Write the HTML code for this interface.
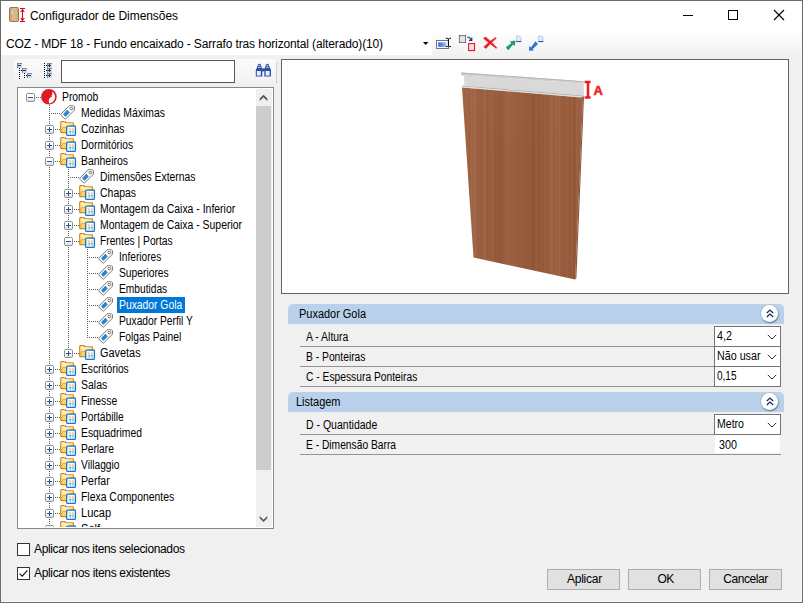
<!DOCTYPE html>
<html lang="pt-BR"><head><meta charset="utf-8"><title>Configurador de Dimensões</title><style>
*{box-sizing:border-box;margin:0;padding:0}
html,body{width:803px;height:603px;overflow:hidden;background:#f0f0f0}
body{position:relative;font-family:"Liberation Sans",sans-serif;font-size:11px;color:#000}
.a{position:absolute}
.ic{position:absolute;overflow:visible}
.tl{position:absolute;height:16px;line-height:16px;font-size:12px;white-space:nowrap;color:#000;transform-origin:0 0}
.tl.sel{color:#fff}
.selbg{position:absolute;background:#0078d7}
.t12{position:absolute;font-size:12px;white-space:nowrap;line-height:16px;height:16px}
.t11{position:absolute;font-size:12px;white-space:nowrap;line-height:16px;height:16px;transform-origin:0 0}
.btn{position:absolute;width:73px;height:21px;top:569px;background:#e1e1e1;border:1px solid #adadad;font-size:12px;line-height:19px;text-align:center}
.hdr{position:absolute;left:287.6px;width:496px;height:20px;background:#b9d1ea;border-radius:5px 5px 0 0}
.ln{position:absolute;left:300px;width:481px;height:1px;background:#939393}
.cb{position:absolute;left:714px;width:67px;height:21px;background:#fff;border:1px solid #747474}
.circ{position:absolute;width:17px;height:17px;border-radius:50%;background:radial-gradient(circle at 45% 40%,#fff 55%,#e3e6ec 100%);box-shadow:0 0 0 0.6px rgba(110,120,140,.45),0.6px 1.2px 1.6px rgba(50,60,80,.6)}
</style></head><body>
<svg width="0" height="0" style="position:absolute;left:0;top:0"><defs><linearGradient id="fg" x1="0" y1="0" x2="0" y2="1"><stop offset="0" stop-color="#fff3bd"/><stop offset="1" stop-color="#fbd15f"/></linearGradient><linearGradient id="eg" x1="0" y1="0" x2="0" y2="1"><stop offset="0.4" stop-color="#ffffff"/><stop offset="1" stop-color="#dcdcdc"/></linearGradient></defs></svg>
<div class="a" style="left:0;top:0;width:803px;height:31px;background:#fff"></div>
<div class="a" style="left:0;top:31px;width:803px;height:25px;background:linear-gradient(#ffffff,#f1f1f1)"></div>
<div class="a" style="left:1px;top:31px;width:431px;height:24px;background:#fff"></div>
<svg class="ic" style="left:8px;top:6px" width="19" height="18" viewBox="0 0 19 18">
<defs><linearGradient id="wd" x1="0" y1="0" x2="1" y2="0"><stop offset="0" stop-color="#c9a06a"/><stop offset="0.5" stop-color="#dfbd8c"/><stop offset="1" stop-color="#cfa872"/></linearGradient></defs>
<rect x="1.5" y="1.5" width="9" height="14" rx="1" fill="url(#wd)" stroke="#9a7648" stroke-width="1"/>
<rect x="3.6" y="4" width="1.3" height="5" fill="#f2f2f2" stroke="#9b9b9b" stroke-width="0.3"/>
<path d="M12 2.5 H17 M12 15.5 H17 M14.5 3 V15" stroke="#e3061a" stroke-width="1.1" fill="none"/><path d="M12.1 5.8 L14.5 3 L16.9 5.8 Z M12.1 12.2 L14.5 15 L16.9 12.2 Z" fill="#e3061a"/>
</svg>
<div class="t12" style="left:30px;top:8px;letter-spacing:-0.057px;">Configurador de Dimensões</div>
<svg class="ic" style="left:680px;top:5px" width="110" height="20" viewBox="0 0 110 20" shape-rendering="crispEdges">
<path d="M3 10.5 H13" stroke="#000" stroke-width="1"/>
<rect x="48.5" y="5.5" width="9" height="9" fill="none" stroke="#000" stroke-width="1"/>
<path d="M94 5 L104 15 M104 5 L94 15" stroke="#000" stroke-width="1.1" shape-rendering="auto"/>
</svg>
<div class="t12" style="left:6px;top:36px;letter-spacing:-0.129px;">COZ - MDF 18 - Fundo encaixado - Sarrafo tras horizontal (alterado)(10)</div>
<svg class="ic" style="left:423px;top:42px" width="6" height="4" viewBox="0 0 6 4"><path d="M0 0 H5.4 L2.7 3 Z" fill="#000"/></svg>
<svg class="ic" style="left:434px;top:33px" width="114" height="20" viewBox="0 0 114 20">
<defs><linearGradient id="bl" x1="0" y1="0" x2="1" y2="0"><stop offset="0" stop-color="#2a66de"/><stop offset="1" stop-color="#9fc0f8"/></linearGradient></defs>
<rect x="2.5" y="7.5" width="12" height="8" fill="#fff" stroke="#70757f" stroke-width="1"/>
<rect x="4.3" y="9.3" width="8" height="4.6" fill="url(#bl)"/>
<path d="M11.8 5.2 Q13.7 5.2 14.4 6 Q15.1 5.2 17 5.2 M14.4 6 V12.9 M11.8 13.7 Q13.7 13.7 14.4 12.9 Q15.1 13.7 17 13.7" stroke="#000" stroke-width="1" fill="none"/>
<rect x="25.4" y="2.6" width="6.1" height="6.8" fill="#e6e6e6" stroke="#857780" stroke-width="1"/><path d="M25 2.2h.9v.9h-.9z M31 2.2h.9v.9h-.9z M25 8.9h.9v.9h-.9z M31 8.9h.9v.9h-.9z" fill="#3d3238"/>
<rect x="34.6" y="10.6" width="6" height="7" fill="#e4e4e4" stroke="#f00010" stroke-width="1"/>
<path d="M33.2 4.2 L35 4.2 L37.4 6.8 M37.8 4.6 V7.4 H35" stroke="#1430a0" stroke-width="1.1" fill="none"/>
<path d="M49.4 5.4 L51.6 3.9 Q57.6 8.6 62.9 14.7 L62.2 15.4 Q56 10.6 49.4 5.4 Z M61.6 4.4 L62.4 5.2 Q56.6 9.6 52 15.5 L49.8 13.9 Q55 8.4 61.6 4.4 Z" fill="#ea1c24" stroke="#ea1c24" stroke-width="0.5" stroke-linejoin="round"/>
<path d="M71.8 14.4 L77.4 10 L75.8 8.4 L81.4 7.6 L80.9 13 L79 11.6 L74.4 17.2 Z" fill="#1f9a6c"/>
<path d="M82.5 3 H85.5 L87 4.5 V8.6 H82.5 Z" fill="#dbeaff" stroke="#9ab0e0" stroke-width="0.6"/><path d="M82.2 8.6 H87.3" stroke="#3646a8" stroke-width="1"/>
<path d="M95 17.7 L95.3 13 L97 14.6 L101.5 8.3 L104 11.1 L98.6 16.2 L99.8 17.4 Z" fill="#2f70d2"/>
<path d="M104.5 3 H107.5 L109 4.5 V8.6 H104.5 Z" fill="#dbeaff" stroke="#9ab0e0" stroke-width="0.6"/><path d="M104.2 8.6 H109.3" stroke="#3646a8" stroke-width="1"/>
</svg>
<div class="a" style="left:14px;top:59px;width:262px;height:25px;border-radius:3px;background:linear-gradient(#fbfbfb,#f1f1f1)"></div>
<svg class="ic" style="left:16px;top:61px" width="40" height="20" viewBox="0 0 40 20" shape-rendering="crispEdges">
<g fill="#d8d8d8" stroke="none">
<rect x="1" y="2" width="5" height="5"/><rect x="6" y="7" width="5" height="5"/><rect x="11" y="12" width="5" height="5"/>
<rect x="31" y="2" width="5" height="5"/><rect x="31" y="7" width="5" height="5"/><rect x="31" y="12" width="5" height="5"/>
</g>
<g fill="none" stroke="#5b8fc9" stroke-width="1">
<path d="M1.5 7 V2.5 H6 M6.5 12 V7.5 H11 M11.5 17 V12.5 H16"/>
<path d="M31.5 7 V2.5 H36 M31.5 12 V7.5 H36 M31.5 17 V12.5 H36"/>
</g>
<g stroke="#333" stroke-width="1" fill="none">
<path d="M2 4.5 H5 M7 9.5 H10 M12 14.5 H15"/>
<path d="M32 4.5 H35 M33.5 3 V6 M32 9.5 H35 M33.5 8 V11 M32 14.5 H35 M33.5 13 V16"/>
</g>
<g fill="#000">
<path d="M3 7h1v1h-1z M3 9h1v1h-1z M3 11h1v1h-1z M3 13h1v1h-1z M3 15h1v1h-1z M3 17h1v1h-1z M5 9h1v1h-1z"/>
<path d="M8 12h1v1h-1z M8 14h1v1h-1z M8 16h1v1h-1z M10 14h1v1h-1z"/>
<path d="M28 2h1v1h-1z M28 4h1v1h-1z M28 6h1v1h-1z M28 8h1v1h-1z M28 10h1v1h-1z M28 12h1v1h-1z M28 14h1v1h-1z M28 16h1v1h-1z M30 4h1v1h-1z M30 9h1v1h-1z M30 14h1v1h-1z"/>
</g></svg>
<div class="a" style="left:61px;top:60px;width:174px;height:23px;background:#fff;border:1px solid #555"></div>
<div class="a" style="left:276px;top:62px;width:1px;height:21px;background:#cfcfcf"></div>
<svg class="ic" style="left:255px;top:63px" width="17" height="15" viewBox="0 0 17 15">
<path d="M2.5 3.2 Q2.5 0.8 4.4 0.8 Q6.3 0.8 6.3 3.2 L7.3 6 V13.4 H0.8 V7 Z" fill="#3050a8"/>
<path d="M10.5 3.2 Q10.5 0.8 12.4 0.8 Q14.3 0.8 14.3 3.2 L16 7 V13.4 H9.3 V6 Z" fill="#3050a8"/>
<rect x="6.8" y="5.4" width="3" height="3" fill="#3050a8"/>
<rect x="1.8" y="8" width="4" height="4.6" fill="#e6edfc"/><rect x="10.6" y="8" width="4" height="4.6" fill="#e6edfc"/>
<path d="M3.4 2.4 H5.4 M11.4 2.4 H13.4 M3 4.4 H5.8 M11 4.4 H13.8" stroke="#c9d6f5" stroke-width="0.9"/>
</svg>
<div class="a" style="left:17px;top:87px;width:257px;height:442px;background:#fff;border:1px solid #828790"></div>
<div class="a" style="left:18px;top:88px;width:238px;height:439px;overflow:hidden"><div class="a" style="left:-18px;top:-88px;width:280px;height:540px">
<svg class="ic" style="left:0;top:0" width="280" height="540" viewBox="0 0 280 540"><path d="M36 97h1v1h-1zM38 97h1v1h-1zM40 97h1v1h-1zM51 113h1v1h-1zM53 113h1v1h-1zM55 113h1v1h-1zM57 113h1v1h-1zM59 113h1v1h-1zM55 129h1v1h-1zM57 129h1v1h-1zM59 129h1v1h-1zM55 145h1v1h-1zM57 145h1v1h-1zM59 145h1v1h-1zM55 161h1v1h-1zM57 161h1v1h-1zM59 161h1v1h-1zM70 177h1v1h-1zM72 177h1v1h-1zM74 177h1v1h-1zM76 177h1v1h-1zM78 177h1v1h-1zM74 193h1v1h-1zM76 193h1v1h-1zM78 193h1v1h-1zM74 209h1v1h-1zM76 209h1v1h-1zM78 209h1v1h-1zM74 225h1v1h-1zM76 225h1v1h-1zM78 225h1v1h-1zM74 241h1v1h-1zM76 241h1v1h-1zM78 241h1v1h-1zM89 257h1v1h-1zM91 257h1v1h-1zM93 257h1v1h-1zM95 257h1v1h-1zM97 257h1v1h-1zM89 273h1v1h-1zM91 273h1v1h-1zM93 273h1v1h-1zM95 273h1v1h-1zM97 273h1v1h-1zM89 289h1v1h-1zM91 289h1v1h-1zM93 289h1v1h-1zM95 289h1v1h-1zM97 289h1v1h-1zM89 305h1v1h-1zM91 305h1v1h-1zM93 305h1v1h-1zM95 305h1v1h-1zM97 305h1v1h-1zM89 321h1v1h-1zM91 321h1v1h-1zM93 321h1v1h-1zM95 321h1v1h-1zM97 321h1v1h-1zM89 337h1v1h-1zM91 337h1v1h-1zM93 337h1v1h-1zM95 337h1v1h-1zM97 337h1v1h-1zM74 353h1v1h-1zM76 353h1v1h-1zM78 353h1v1h-1zM55 369h1v1h-1zM57 369h1v1h-1zM59 369h1v1h-1zM55 385h1v1h-1zM57 385h1v1h-1zM59 385h1v1h-1zM55 401h1v1h-1zM57 401h1v1h-1zM59 401h1v1h-1zM55 417h1v1h-1zM57 417h1v1h-1zM59 417h1v1h-1zM55 433h1v1h-1zM57 433h1v1h-1zM59 433h1v1h-1zM55 449h1v1h-1zM57 449h1v1h-1zM59 449h1v1h-1zM55 465h1v1h-1zM57 465h1v1h-1zM59 465h1v1h-1zM55 481h1v1h-1zM57 481h1v1h-1zM59 481h1v1h-1zM55 497h1v1h-1zM57 497h1v1h-1zM59 497h1v1h-1zM55 513h1v1h-1zM57 513h1v1h-1zM59 513h1v1h-1zM55 529h1v1h-1zM57 529h1v1h-1zM59 529h1v1h-1zM49 105h1v1h-1zM49 107h1v1h-1zM49 109h1v1h-1zM49 111h1v1h-1zM49 113h1v1h-1zM49 115h1v1h-1zM49 117h1v1h-1zM49 119h1v1h-1zM49 121h1v1h-1zM49 123h1v1h-1zM49 135h1v1h-1zM49 137h1v1h-1zM49 139h1v1h-1zM49 151h1v1h-1zM49 153h1v1h-1zM49 155h1v1h-1zM49 167h1v1h-1zM49 169h1v1h-1zM49 171h1v1h-1zM49 173h1v1h-1zM49 175h1v1h-1zM49 177h1v1h-1zM49 179h1v1h-1zM49 181h1v1h-1zM49 183h1v1h-1zM49 185h1v1h-1zM49 187h1v1h-1zM49 189h1v1h-1zM49 191h1v1h-1zM49 193h1v1h-1zM49 195h1v1h-1zM49 197h1v1h-1zM49 199h1v1h-1zM49 201h1v1h-1zM49 203h1v1h-1zM49 205h1v1h-1zM49 207h1v1h-1zM49 209h1v1h-1zM49 211h1v1h-1zM49 213h1v1h-1zM49 215h1v1h-1zM49 217h1v1h-1zM49 219h1v1h-1zM49 221h1v1h-1zM49 223h1v1h-1zM49 225h1v1h-1zM49 227h1v1h-1zM49 229h1v1h-1zM49 231h1v1h-1zM49 233h1v1h-1zM49 235h1v1h-1zM49 237h1v1h-1zM49 239h1v1h-1zM49 241h1v1h-1zM49 243h1v1h-1zM49 245h1v1h-1zM49 247h1v1h-1zM49 249h1v1h-1zM49 251h1v1h-1zM49 253h1v1h-1zM49 255h1v1h-1zM49 257h1v1h-1zM49 259h1v1h-1zM49 261h1v1h-1zM49 263h1v1h-1zM49 265h1v1h-1zM49 267h1v1h-1zM49 269h1v1h-1zM49 271h1v1h-1zM49 273h1v1h-1zM49 275h1v1h-1zM49 277h1v1h-1zM49 279h1v1h-1zM49 281h1v1h-1zM49 283h1v1h-1zM49 285h1v1h-1zM49 287h1v1h-1zM49 289h1v1h-1zM49 291h1v1h-1zM49 293h1v1h-1zM49 295h1v1h-1zM49 297h1v1h-1zM49 299h1v1h-1zM49 301h1v1h-1zM49 303h1v1h-1zM49 305h1v1h-1zM49 307h1v1h-1zM49 309h1v1h-1zM49 311h1v1h-1zM49 313h1v1h-1zM49 315h1v1h-1zM49 317h1v1h-1zM49 319h1v1h-1zM49 321h1v1h-1zM49 323h1v1h-1zM49 325h1v1h-1zM49 327h1v1h-1zM49 329h1v1h-1zM49 331h1v1h-1zM49 333h1v1h-1zM49 335h1v1h-1zM49 337h1v1h-1zM49 339h1v1h-1zM49 341h1v1h-1zM49 343h1v1h-1zM49 345h1v1h-1zM49 347h1v1h-1zM49 349h1v1h-1zM49 351h1v1h-1zM49 353h1v1h-1zM49 355h1v1h-1zM49 357h1v1h-1zM49 359h1v1h-1zM49 361h1v1h-1zM49 363h1v1h-1zM49 375h1v1h-1zM49 377h1v1h-1zM49 379h1v1h-1zM49 391h1v1h-1zM49 393h1v1h-1zM49 395h1v1h-1zM49 407h1v1h-1zM49 409h1v1h-1zM49 411h1v1h-1zM49 423h1v1h-1zM49 425h1v1h-1zM49 427h1v1h-1zM49 439h1v1h-1zM49 441h1v1h-1zM49 443h1v1h-1zM49 455h1v1h-1zM49 457h1v1h-1zM49 459h1v1h-1zM49 471h1v1h-1zM49 473h1v1h-1zM49 475h1v1h-1zM49 487h1v1h-1zM49 489h1v1h-1zM49 491h1v1h-1zM49 503h1v1h-1zM49 505h1v1h-1zM49 507h1v1h-1zM49 519h1v1h-1zM49 521h1v1h-1zM49 523h1v1h-1zM68 169h1v1h-1zM68 171h1v1h-1zM68 173h1v1h-1zM68 175h1v1h-1zM68 177h1v1h-1zM68 179h1v1h-1zM68 181h1v1h-1zM68 183h1v1h-1zM68 185h1v1h-1zM68 187h1v1h-1zM68 199h1v1h-1zM68 201h1v1h-1zM68 203h1v1h-1zM68 215h1v1h-1zM68 217h1v1h-1zM68 219h1v1h-1zM68 231h1v1h-1zM68 233h1v1h-1zM68 235h1v1h-1zM68 247h1v1h-1zM68 249h1v1h-1zM68 251h1v1h-1zM68 253h1v1h-1zM68 255h1v1h-1zM68 257h1v1h-1zM68 259h1v1h-1zM68 261h1v1h-1zM68 263h1v1h-1zM68 265h1v1h-1zM68 267h1v1h-1zM68 269h1v1h-1zM68 271h1v1h-1zM68 273h1v1h-1zM68 275h1v1h-1zM68 277h1v1h-1zM68 279h1v1h-1zM68 281h1v1h-1zM68 283h1v1h-1zM68 285h1v1h-1zM68 287h1v1h-1zM68 289h1v1h-1zM68 291h1v1h-1zM68 293h1v1h-1zM68 295h1v1h-1zM68 297h1v1h-1zM68 299h1v1h-1zM68 301h1v1h-1zM68 303h1v1h-1zM68 305h1v1h-1zM68 307h1v1h-1zM68 309h1v1h-1zM68 311h1v1h-1zM68 313h1v1h-1zM68 315h1v1h-1zM68 317h1v1h-1zM68 319h1v1h-1zM68 321h1v1h-1zM68 323h1v1h-1zM68 325h1v1h-1zM68 327h1v1h-1zM68 329h1v1h-1zM68 331h1v1h-1zM68 333h1v1h-1zM68 335h1v1h-1zM68 337h1v1h-1zM68 339h1v1h-1zM68 341h1v1h-1zM68 343h1v1h-1zM68 345h1v1h-1zM68 347h1v1h-1zM87 249h1v1h-1zM87 251h1v1h-1zM87 253h1v1h-1zM87 255h1v1h-1zM87 257h1v1h-1zM87 259h1v1h-1zM87 261h1v1h-1zM87 263h1v1h-1zM87 265h1v1h-1zM87 267h1v1h-1zM87 269h1v1h-1zM87 271h1v1h-1zM87 273h1v1h-1zM87 275h1v1h-1zM87 277h1v1h-1zM87 279h1v1h-1zM87 281h1v1h-1zM87 283h1v1h-1zM87 285h1v1h-1zM87 287h1v1h-1zM87 289h1v1h-1zM87 291h1v1h-1zM87 293h1v1h-1zM87 295h1v1h-1zM87 297h1v1h-1zM87 299h1v1h-1zM87 301h1v1h-1zM87 303h1v1h-1zM87 305h1v1h-1zM87 307h1v1h-1zM87 309h1v1h-1zM87 311h1v1h-1zM87 313h1v1h-1zM87 315h1v1h-1zM87 317h1v1h-1zM87 319h1v1h-1zM87 321h1v1h-1zM87 323h1v1h-1zM87 325h1v1h-1zM87 327h1v1h-1zM87 329h1v1h-1zM87 331h1v1h-1zM87 333h1v1h-1zM87 335h1v1h-1zM87 337h1v1h-1z" fill="#5a5a5a" shape-rendering="crispEdges"/></svg>
<svg class="ic" style="left:26px;top:93px" width="9" height="9" viewBox="0 0 9 9">
<rect x="0.5" y="0.5" width="8" height="8" rx="1.2" fill="url(#eg)" stroke="#8e8e8e"/><path d="M2 4.5 H7" stroke="#2d4fa0" stroke-width="1"/></svg>
<svg class="ic" style="left:41px;top:89px" width="17" height="17" viewBox="0 0 17 17">
<circle cx="7.95" cy="7.8" r="7.8" fill="#dc1b22"/>
<path d="M10.6 2.6 Q12 3.2 12.9 4.2 A6.6 6.6 0 0 1 8.3 14.4 Q7.5 12.8 7.8 11.2 Q8.1 9.6 9.2 8.6 Q10 7.9 11.1 7.5 L10.6 6.7 L10.8 5.9 L11.5 5.1 L11.3 4.3 Q11.2 3.4 10.6 2.6 Z" fill="#ffffff"/>
</svg>
<div class="tl" style="left:62px;top:89px;transform:scaleX(0.8613)">Promob</div>
<svg class="ic" style="left:60px;top:105px" width="17" height="16" viewBox="0 0 17 16">
<path d="M9 0.8 H13.7 L14.5 1.6 V5.1 L5.5 14.1 Q5.2 14.4 4.9 14.1 L0.7 9.9 Q0.5 9.6 0.8 9.3 Z" fill="#ffffff" stroke="#6c6c6c" stroke-width="0.9" stroke-linejoin="round"/>
<path d="M9.2 1.3 H13.5 L14 1.8 V4.9 L12 6.8 L8.2 2.6 Z" fill="#e6e6e6"/>
<circle cx="11.4" cy="3.5" r="1.25" fill="#ffffff" stroke="#6a6a6a" stroke-width="0.9"/>
<path d="M7.45 4.8 L9.8 7.45 L5.5 11.8 L3 9.3 Z" fill="#1577c8"/>
<path d="M6.8 5.5 L9.2 8 M5.9 6.4 L8.3 8.9 M5 7.3 L7.4 9.8 M4.1 8.2 L6.5 10.7 M3.4 9 L5.8 11.5" stroke="#6fb6ee" stroke-width="0.45"/>
</svg>
<div class="tl" style="left:81px;top:105px;transform:scaleX(0.8676)">Medidas Máximas</div>
<svg class="ic" style="left:45px;top:125px" width="9" height="9" viewBox="0 0 9 9">
<rect x="0.5" y="0.5" width="8" height="8" rx="1.2" fill="url(#eg)" stroke="#8e8e8e"/><path d="M2 4.5 H7 M4.5 2 V7" stroke="#2d4fa0" stroke-width="1"/></svg>
<svg class="ic" style="left:60px;top:121px" width="17" height="16" viewBox="0 0 17 16">
<path d="M0.7 1.3 Q0.7 0.7 1.3 0.7 H5 Q5.4 0.7 5.6 1.1 L6 1.8 H12.8 Q13.4 1.8 13.4 2.4 V11 Q13.4 11.6 12.8 11.6 H1.3 Q0.7 11.6 0.7 11 Z" fill="url(#fg)" stroke="#cf8a28" stroke-width="1.2"/>
<path d="M1.5 2.9 H12.6" stroke="#fffbe6" stroke-width="0.8"/>
<path d="M1.3 11 L2.9 6.6 H12" fill="none" stroke="#e6a23c" stroke-width="0.9"/>
<path d="M3.2 7.2 H12.8 V11 H1.8 Z" fill="#fcd669"/>
<path d="M9.5 4.3 H14.6 Q15.7 4.3 15.9 5.2" stroke="#f0a030" stroke-width="0.9" fill="none"/>
<rect x="6.65" y="5.15" width="8.8" height="9.3" rx="1.3" fill="#ffffff" stroke="#1478be" stroke-width="1.3"/>
<path d="M10.2 8.4 V13.4 M13.1 8.4 V13.4 M8.4 10.8 H14.4" stroke="#8db4e4" stroke-width="1" fill="none"/>
<path d="M8.4 7.9 H10.4 M11.6 7.9 H13.6" stroke="#f6b93a" stroke-width="1" fill="none"/>
</svg>
<div class="tl" style="left:81px;top:121px;transform:scaleX(0.8695)">Cozinhas</div>
<svg class="ic" style="left:45px;top:141px" width="9" height="9" viewBox="0 0 9 9">
<rect x="0.5" y="0.5" width="8" height="8" rx="1.2" fill="url(#eg)" stroke="#8e8e8e"/><path d="M2 4.5 H7 M4.5 2 V7" stroke="#2d4fa0" stroke-width="1"/></svg>
<svg class="ic" style="left:60px;top:137px" width="17" height="16" viewBox="0 0 17 16">
<path d="M0.7 1.3 Q0.7 0.7 1.3 0.7 H5 Q5.4 0.7 5.6 1.1 L6 1.8 H12.8 Q13.4 1.8 13.4 2.4 V11 Q13.4 11.6 12.8 11.6 H1.3 Q0.7 11.6 0.7 11 Z" fill="url(#fg)" stroke="#cf8a28" stroke-width="1.2"/>
<path d="M1.5 2.9 H12.6" stroke="#fffbe6" stroke-width="0.8"/>
<path d="M1.3 11 L2.9 6.6 H12" fill="none" stroke="#e6a23c" stroke-width="0.9"/>
<path d="M3.2 7.2 H12.8 V11 H1.8 Z" fill="#fcd669"/>
<path d="M9.5 4.3 H14.6 Q15.7 4.3 15.9 5.2" stroke="#f0a030" stroke-width="0.9" fill="none"/>
<rect x="6.65" y="5.15" width="8.8" height="9.3" rx="1.3" fill="#ffffff" stroke="#1478be" stroke-width="1.3"/>
<path d="M10.2 8.4 V13.4 M13.1 8.4 V13.4 M8.4 10.8 H14.4" stroke="#8db4e4" stroke-width="1" fill="none"/>
<path d="M8.4 7.9 H10.4 M11.6 7.9 H13.6" stroke="#f6b93a" stroke-width="1" fill="none"/>
</svg>
<div class="tl" style="left:81px;top:137px;transform:scaleX(0.8477)">Dormitórios</div>
<svg class="ic" style="left:45px;top:157px" width="9" height="9" viewBox="0 0 9 9">
<rect x="0.5" y="0.5" width="8" height="8" rx="1.2" fill="url(#eg)" stroke="#8e8e8e"/><path d="M2 4.5 H7" stroke="#2d4fa0" stroke-width="1"/></svg>
<svg class="ic" style="left:60px;top:153px" width="17" height="16" viewBox="0 0 17 16">
<path d="M0.7 1.3 Q0.7 0.7 1.3 0.7 H5 Q5.4 0.7 5.6 1.1 L6 1.8 H12.8 Q13.4 1.8 13.4 2.4 V11 Q13.4 11.6 12.8 11.6 H1.3 Q0.7 11.6 0.7 11 Z" fill="url(#fg)" stroke="#cf8a28" stroke-width="1.2"/>
<path d="M1.5 2.9 H12.6" stroke="#fffbe6" stroke-width="0.8"/>
<path d="M1.3 11 L2.9 6.6 H12" fill="none" stroke="#e6a23c" stroke-width="0.9"/>
<path d="M3.2 7.2 H12.8 V11 H1.8 Z" fill="#fcd669"/>
<path d="M9.5 4.3 H14.6 Q15.7 4.3 15.9 5.2" stroke="#f0a030" stroke-width="0.9" fill="none"/>
<rect x="6.65" y="5.15" width="8.8" height="9.3" rx="1.3" fill="#ffffff" stroke="#1478be" stroke-width="1.3"/>
<path d="M10.2 8.4 V13.4 M13.1 8.4 V13.4 M8.4 10.8 H14.4" stroke="#8db4e4" stroke-width="1" fill="none"/>
<path d="M8.4 7.9 H10.4 M11.6 7.9 H13.6" stroke="#f6b93a" stroke-width="1" fill="none"/>
</svg>
<div class="tl" style="left:81px;top:153px;transform:scaleX(0.8696)">Banheiros</div>
<svg class="ic" style="left:79px;top:169px" width="17" height="16" viewBox="0 0 17 16">
<path d="M9 0.8 H13.7 L14.5 1.6 V5.1 L5.5 14.1 Q5.2 14.4 4.9 14.1 L0.7 9.9 Q0.5 9.6 0.8 9.3 Z" fill="#ffffff" stroke="#6c6c6c" stroke-width="0.9" stroke-linejoin="round"/>
<path d="M9.2 1.3 H13.5 L14 1.8 V4.9 L12 6.8 L8.2 2.6 Z" fill="#e6e6e6"/>
<circle cx="11.4" cy="3.5" r="1.25" fill="#ffffff" stroke="#6a6a6a" stroke-width="0.9"/>
<path d="M7.45 4.8 L9.8 7.45 L5.5 11.8 L3 9.3 Z" fill="#1577c8"/>
<path d="M6.8 5.5 L9.2 8 M5.9 6.4 L8.3 8.9 M5 7.3 L7.4 9.8 M4.1 8.2 L6.5 10.7 M3.4 9 L5.8 11.5" stroke="#6fb6ee" stroke-width="0.45"/>
</svg>
<div class="tl" style="left:100px;top:169px;transform:scaleX(0.8616)">Dimensões Externas</div>
<svg class="ic" style="left:64px;top:189px" width="9" height="9" viewBox="0 0 9 9">
<rect x="0.5" y="0.5" width="8" height="8" rx="1.2" fill="url(#eg)" stroke="#8e8e8e"/><path d="M2 4.5 H7 M4.5 2 V7" stroke="#2d4fa0" stroke-width="1"/></svg>
<svg class="ic" style="left:79px;top:185px" width="17" height="16" viewBox="0 0 17 16">
<path d="M0.7 1.3 Q0.7 0.7 1.3 0.7 H5 Q5.4 0.7 5.6 1.1 L6 1.8 H12.8 Q13.4 1.8 13.4 2.4 V11 Q13.4 11.6 12.8 11.6 H1.3 Q0.7 11.6 0.7 11 Z" fill="url(#fg)" stroke="#cf8a28" stroke-width="1.2"/>
<path d="M1.5 2.9 H12.6" stroke="#fffbe6" stroke-width="0.8"/>
<path d="M1.3 11 L2.9 6.6 H12" fill="none" stroke="#e6a23c" stroke-width="0.9"/>
<path d="M3.2 7.2 H12.8 V11 H1.8 Z" fill="#fcd669"/>
<path d="M9.5 4.3 H14.6 Q15.7 4.3 15.9 5.2" stroke="#f0a030" stroke-width="0.9" fill="none"/>
<rect x="6.65" y="5.15" width="8.8" height="9.3" rx="1.3" fill="#ffffff" stroke="#1478be" stroke-width="1.3"/>
<path d="M10.2 8.4 V13.4 M13.1 8.4 V13.4 M8.4 10.8 H14.4" stroke="#8db4e4" stroke-width="1" fill="none"/>
<path d="M8.4 7.9 H10.4 M11.6 7.9 H13.6" stroke="#f6b93a" stroke-width="1" fill="none"/>
</svg>
<div class="tl" style="left:100px;top:185px;transform:scaleX(0.8725)">Chapas</div>
<svg class="ic" style="left:64px;top:205px" width="9" height="9" viewBox="0 0 9 9">
<rect x="0.5" y="0.5" width="8" height="8" rx="1.2" fill="url(#eg)" stroke="#8e8e8e"/><path d="M2 4.5 H7 M4.5 2 V7" stroke="#2d4fa0" stroke-width="1"/></svg>
<svg class="ic" style="left:79px;top:201px" width="17" height="16" viewBox="0 0 17 16">
<path d="M0.7 1.3 Q0.7 0.7 1.3 0.7 H5 Q5.4 0.7 5.6 1.1 L6 1.8 H12.8 Q13.4 1.8 13.4 2.4 V11 Q13.4 11.6 12.8 11.6 H1.3 Q0.7 11.6 0.7 11 Z" fill="url(#fg)" stroke="#cf8a28" stroke-width="1.2"/>
<path d="M1.5 2.9 H12.6" stroke="#fffbe6" stroke-width="0.8"/>
<path d="M1.3 11 L2.9 6.6 H12" fill="none" stroke="#e6a23c" stroke-width="0.9"/>
<path d="M3.2 7.2 H12.8 V11 H1.8 Z" fill="#fcd669"/>
<path d="M9.5 4.3 H14.6 Q15.7 4.3 15.9 5.2" stroke="#f0a030" stroke-width="0.9" fill="none"/>
<rect x="6.65" y="5.15" width="8.8" height="9.3" rx="1.3" fill="#ffffff" stroke="#1478be" stroke-width="1.3"/>
<path d="M10.2 8.4 V13.4 M13.1 8.4 V13.4 M8.4 10.8 H14.4" stroke="#8db4e4" stroke-width="1" fill="none"/>
<path d="M8.4 7.9 H10.4 M11.6 7.9 H13.6" stroke="#f6b93a" stroke-width="1" fill="none"/>
</svg>
<div class="tl" style="left:100px;top:201px;transform:scaleX(0.8700)">Montagem da Caixa - Inferior</div>
<svg class="ic" style="left:64px;top:221px" width="9" height="9" viewBox="0 0 9 9">
<rect x="0.5" y="0.5" width="8" height="8" rx="1.2" fill="url(#eg)" stroke="#8e8e8e"/><path d="M2 4.5 H7 M4.5 2 V7" stroke="#2d4fa0" stroke-width="1"/></svg>
<svg class="ic" style="left:79px;top:217px" width="17" height="16" viewBox="0 0 17 16">
<path d="M0.7 1.3 Q0.7 0.7 1.3 0.7 H5 Q5.4 0.7 5.6 1.1 L6 1.8 H12.8 Q13.4 1.8 13.4 2.4 V11 Q13.4 11.6 12.8 11.6 H1.3 Q0.7 11.6 0.7 11 Z" fill="url(#fg)" stroke="#cf8a28" stroke-width="1.2"/>
<path d="M1.5 2.9 H12.6" stroke="#fffbe6" stroke-width="0.8"/>
<path d="M1.3 11 L2.9 6.6 H12" fill="none" stroke="#e6a23c" stroke-width="0.9"/>
<path d="M3.2 7.2 H12.8 V11 H1.8 Z" fill="#fcd669"/>
<path d="M9.5 4.3 H14.6 Q15.7 4.3 15.9 5.2" stroke="#f0a030" stroke-width="0.9" fill="none"/>
<rect x="6.65" y="5.15" width="8.8" height="9.3" rx="1.3" fill="#ffffff" stroke="#1478be" stroke-width="1.3"/>
<path d="M10.2 8.4 V13.4 M13.1 8.4 V13.4 M8.4 10.8 H14.4" stroke="#8db4e4" stroke-width="1" fill="none"/>
<path d="M8.4 7.9 H10.4 M11.6 7.9 H13.6" stroke="#f6b93a" stroke-width="1" fill="none"/>
</svg>
<div class="tl" style="left:100px;top:217px;transform:scaleX(0.8689)">Montagem de Caixa - Superior</div>
<svg class="ic" style="left:64px;top:237px" width="9" height="9" viewBox="0 0 9 9">
<rect x="0.5" y="0.5" width="8" height="8" rx="1.2" fill="url(#eg)" stroke="#8e8e8e"/><path d="M2 4.5 H7" stroke="#2d4fa0" stroke-width="1"/></svg>
<svg class="ic" style="left:79px;top:233px" width="17" height="16" viewBox="0 0 17 16">
<path d="M0.7 1.3 Q0.7 0.7 1.3 0.7 H5 Q5.4 0.7 5.6 1.1 L6 1.8 H12.8 Q13.4 1.8 13.4 2.4 V11 Q13.4 11.6 12.8 11.6 H1.3 Q0.7 11.6 0.7 11 Z" fill="url(#fg)" stroke="#cf8a28" stroke-width="1.2"/>
<path d="M1.5 2.9 H12.6" stroke="#fffbe6" stroke-width="0.8"/>
<path d="M1.3 11 L2.9 6.6 H12" fill="none" stroke="#e6a23c" stroke-width="0.9"/>
<path d="M3.2 7.2 H12.8 V11 H1.8 Z" fill="#fcd669"/>
<path d="M9.5 4.3 H14.6 Q15.7 4.3 15.9 5.2" stroke="#f0a030" stroke-width="0.9" fill="none"/>
<rect x="6.65" y="5.15" width="8.8" height="9.3" rx="1.3" fill="#ffffff" stroke="#1478be" stroke-width="1.3"/>
<path d="M10.2 8.4 V13.4 M13.1 8.4 V13.4 M8.4 10.8 H14.4" stroke="#8db4e4" stroke-width="1" fill="none"/>
<path d="M8.4 7.9 H10.4 M11.6 7.9 H13.6" stroke="#f6b93a" stroke-width="1" fill="none"/>
</svg>
<div class="tl" style="left:100px;top:233px;transform:scaleX(0.8537)">Frentes | Portas</div>
<svg class="ic" style="left:98px;top:249px" width="17" height="16" viewBox="0 0 17 16">
<path d="M9 0.8 H13.7 L14.5 1.6 V5.1 L5.5 14.1 Q5.2 14.4 4.9 14.1 L0.7 9.9 Q0.5 9.6 0.8 9.3 Z" fill="#ffffff" stroke="#6c6c6c" stroke-width="0.9" stroke-linejoin="round"/>
<path d="M9.2 1.3 H13.5 L14 1.8 V4.9 L12 6.8 L8.2 2.6 Z" fill="#e6e6e6"/>
<circle cx="11.4" cy="3.5" r="1.25" fill="#ffffff" stroke="#6a6a6a" stroke-width="0.9"/>
<path d="M7.45 4.8 L9.8 7.45 L5.5 11.8 L3 9.3 Z" fill="#1577c8"/>
<path d="M6.8 5.5 L9.2 8 M5.9 6.4 L8.3 8.9 M5 7.3 L7.4 9.8 M4.1 8.2 L6.5 10.7 M3.4 9 L5.8 11.5" stroke="#6fb6ee" stroke-width="0.45"/>
</svg>
<div class="tl" style="left:119px;top:249px;transform:scaleX(0.8435)">Inferiores</div>
<svg class="ic" style="left:98px;top:265px" width="17" height="16" viewBox="0 0 17 16">
<path d="M9 0.8 H13.7 L14.5 1.6 V5.1 L5.5 14.1 Q5.2 14.4 4.9 14.1 L0.7 9.9 Q0.5 9.6 0.8 9.3 Z" fill="#ffffff" stroke="#6c6c6c" stroke-width="0.9" stroke-linejoin="round"/>
<path d="M9.2 1.3 H13.5 L14 1.8 V4.9 L12 6.8 L8.2 2.6 Z" fill="#e6e6e6"/>
<circle cx="11.4" cy="3.5" r="1.25" fill="#ffffff" stroke="#6a6a6a" stroke-width="0.9"/>
<path d="M7.45 4.8 L9.8 7.45 L5.5 11.8 L3 9.3 Z" fill="#1577c8"/>
<path d="M6.8 5.5 L9.2 8 M5.9 6.4 L8.3 8.9 M5 7.3 L7.4 9.8 M4.1 8.2 L6.5 10.7 M3.4 9 L5.8 11.5" stroke="#6fb6ee" stroke-width="0.45"/>
</svg>
<div class="tl" style="left:119px;top:265px;transform:scaleX(0.8564)">Superiores</div>
<svg class="ic" style="left:98px;top:281px" width="17" height="16" viewBox="0 0 17 16">
<path d="M9 0.8 H13.7 L14.5 1.6 V5.1 L5.5 14.1 Q5.2 14.4 4.9 14.1 L0.7 9.9 Q0.5 9.6 0.8 9.3 Z" fill="#ffffff" stroke="#6c6c6c" stroke-width="0.9" stroke-linejoin="round"/>
<path d="M9.2 1.3 H13.5 L14 1.8 V4.9 L12 6.8 L8.2 2.6 Z" fill="#e6e6e6"/>
<circle cx="11.4" cy="3.5" r="1.25" fill="#ffffff" stroke="#6a6a6a" stroke-width="0.9"/>
<path d="M7.45 4.8 L9.8 7.45 L5.5 11.8 L3 9.3 Z" fill="#1577c8"/>
<path d="M6.8 5.5 L9.2 8 M5.9 6.4 L8.3 8.9 M5 7.3 L7.4 9.8 M4.1 8.2 L6.5 10.7 M3.4 9 L5.8 11.5" stroke="#6fb6ee" stroke-width="0.45"/>
</svg>
<div class="tl" style="left:119px;top:281px;transform:scaleX(0.8500)">Embutidas</div>
<svg class="ic" style="left:98px;top:297px" width="17" height="16" viewBox="0 0 17 16">
<path d="M9 0.8 H13.7 L14.5 1.6 V5.1 L5.5 14.1 Q5.2 14.4 4.9 14.1 L0.7 9.9 Q0.5 9.6 0.8 9.3 Z" fill="#ffffff" stroke="#6c6c6c" stroke-width="0.9" stroke-linejoin="round"/>
<path d="M9.2 1.3 H13.5 L14 1.8 V4.9 L12 6.8 L8.2 2.6 Z" fill="#e6e6e6"/>
<circle cx="11.4" cy="3.5" r="1.25" fill="#ffffff" stroke="#6a6a6a" stroke-width="0.9"/>
<path d="M7.45 4.8 L9.8 7.45 L5.5 11.8 L3 9.3 Z" fill="#1577c8"/>
<path d="M6.8 5.5 L9.2 8 M5.9 6.4 L8.3 8.9 M5 7.3 L7.4 9.8 M4.1 8.2 L6.5 10.7 M3.4 9 L5.8 11.5" stroke="#6fb6ee" stroke-width="0.45"/>
</svg>
<div class="selbg" style="left:117px;top:297px;width:68px;height:16px"></div>
<div class="tl sel" style="left:119px;top:297px;transform:scaleX(0.8611)">Puxador Gola</div>
<svg class="ic" style="left:98px;top:313px" width="17" height="16" viewBox="0 0 17 16">
<path d="M9 0.8 H13.7 L14.5 1.6 V5.1 L5.5 14.1 Q5.2 14.4 4.9 14.1 L0.7 9.9 Q0.5 9.6 0.8 9.3 Z" fill="#ffffff" stroke="#6c6c6c" stroke-width="0.9" stroke-linejoin="round"/>
<path d="M9.2 1.3 H13.5 L14 1.8 V4.9 L12 6.8 L8.2 2.6 Z" fill="#e6e6e6"/>
<circle cx="11.4" cy="3.5" r="1.25" fill="#ffffff" stroke="#6a6a6a" stroke-width="0.9"/>
<path d="M7.45 4.8 L9.8 7.45 L5.5 11.8 L3 9.3 Z" fill="#1577c8"/>
<path d="M6.8 5.5 L9.2 8 M5.9 6.4 L8.3 8.9 M5 7.3 L7.4 9.8 M4.1 8.2 L6.5 10.7 M3.4 9 L5.8 11.5" stroke="#6fb6ee" stroke-width="0.45"/>
</svg>
<div class="tl" style="left:119px;top:313px;transform:scaleX(0.8543)">Puxador Perfil Y</div>
<svg class="ic" style="left:98px;top:329px" width="17" height="16" viewBox="0 0 17 16">
<path d="M9 0.8 H13.7 L14.5 1.6 V5.1 L5.5 14.1 Q5.2 14.4 4.9 14.1 L0.7 9.9 Q0.5 9.6 0.8 9.3 Z" fill="#ffffff" stroke="#6c6c6c" stroke-width="0.9" stroke-linejoin="round"/>
<path d="M9.2 1.3 H13.5 L14 1.8 V4.9 L12 6.8 L8.2 2.6 Z" fill="#e6e6e6"/>
<circle cx="11.4" cy="3.5" r="1.25" fill="#ffffff" stroke="#6a6a6a" stroke-width="0.9"/>
<path d="M7.45 4.8 L9.8 7.45 L5.5 11.8 L3 9.3 Z" fill="#1577c8"/>
<path d="M6.8 5.5 L9.2 8 M5.9 6.4 L8.3 8.9 M5 7.3 L7.4 9.8 M4.1 8.2 L6.5 10.7 M3.4 9 L5.8 11.5" stroke="#6fb6ee" stroke-width="0.45"/>
</svg>
<div class="tl" style="left:119px;top:329px;transform:scaleX(0.8554)">Folgas Painel</div>
<svg class="ic" style="left:64px;top:349px" width="9" height="9" viewBox="0 0 9 9">
<rect x="0.5" y="0.5" width="8" height="8" rx="1.2" fill="url(#eg)" stroke="#8e8e8e"/><path d="M2 4.5 H7 M4.5 2 V7" stroke="#2d4fa0" stroke-width="1"/></svg>
<svg class="ic" style="left:79px;top:345px" width="17" height="16" viewBox="0 0 17 16">
<path d="M0.7 1.3 Q0.7 0.7 1.3 0.7 H5 Q5.4 0.7 5.6 1.1 L6 1.8 H12.8 Q13.4 1.8 13.4 2.4 V11 Q13.4 11.6 12.8 11.6 H1.3 Q0.7 11.6 0.7 11 Z" fill="url(#fg)" stroke="#cf8a28" stroke-width="1.2"/>
<path d="M1.5 2.9 H12.6" stroke="#fffbe6" stroke-width="0.8"/>
<path d="M1.3 11 L2.9 6.6 H12" fill="none" stroke="#e6a23c" stroke-width="0.9"/>
<path d="M3.2 7.2 H12.8 V11 H1.8 Z" fill="#fcd669"/>
<path d="M9.5 4.3 H14.6 Q15.7 4.3 15.9 5.2" stroke="#f0a030" stroke-width="0.9" fill="none"/>
<rect x="6.65" y="5.15" width="8.8" height="9.3" rx="1.3" fill="#ffffff" stroke="#1478be" stroke-width="1.3"/>
<path d="M10.2 8.4 V13.4 M13.1 8.4 V13.4 M8.4 10.8 H14.4" stroke="#8db4e4" stroke-width="1" fill="none"/>
<path d="M8.4 7.9 H10.4 M11.6 7.9 H13.6" stroke="#f6b93a" stroke-width="1" fill="none"/>
</svg>
<div class="tl" style="left:100px;top:345px;transform:scaleX(0.9082)">Gavetas</div>
<svg class="ic" style="left:45px;top:365px" width="9" height="9" viewBox="0 0 9 9">
<rect x="0.5" y="0.5" width="8" height="8" rx="1.2" fill="url(#eg)" stroke="#8e8e8e"/><path d="M2 4.5 H7 M4.5 2 V7" stroke="#2d4fa0" stroke-width="1"/></svg>
<svg class="ic" style="left:60px;top:361px" width="17" height="16" viewBox="0 0 17 16">
<path d="M0.7 1.3 Q0.7 0.7 1.3 0.7 H5 Q5.4 0.7 5.6 1.1 L6 1.8 H12.8 Q13.4 1.8 13.4 2.4 V11 Q13.4 11.6 12.8 11.6 H1.3 Q0.7 11.6 0.7 11 Z" fill="url(#fg)" stroke="#cf8a28" stroke-width="1.2"/>
<path d="M1.5 2.9 H12.6" stroke="#fffbe6" stroke-width="0.8"/>
<path d="M1.3 11 L2.9 6.6 H12" fill="none" stroke="#e6a23c" stroke-width="0.9"/>
<path d="M3.2 7.2 H12.8 V11 H1.8 Z" fill="#fcd669"/>
<path d="M9.5 4.3 H14.6 Q15.7 4.3 15.9 5.2" stroke="#f0a030" stroke-width="0.9" fill="none"/>
<rect x="6.65" y="5.15" width="8.8" height="9.3" rx="1.3" fill="#ffffff" stroke="#1478be" stroke-width="1.3"/>
<path d="M10.2 8.4 V13.4 M13.1 8.4 V13.4 M8.4 10.8 H14.4" stroke="#8db4e4" stroke-width="1" fill="none"/>
<path d="M8.4 7.9 H10.4 M11.6 7.9 H13.6" stroke="#f6b93a" stroke-width="1" fill="none"/>
</svg>
<div class="tl" style="left:81px;top:361px;transform:scaleX(0.8515)">Escritórios</div>
<svg class="ic" style="left:45px;top:381px" width="9" height="9" viewBox="0 0 9 9">
<rect x="0.5" y="0.5" width="8" height="8" rx="1.2" fill="url(#eg)" stroke="#8e8e8e"/><path d="M2 4.5 H7 M4.5 2 V7" stroke="#2d4fa0" stroke-width="1"/></svg>
<svg class="ic" style="left:60px;top:377px" width="17" height="16" viewBox="0 0 17 16">
<path d="M0.7 1.3 Q0.7 0.7 1.3 0.7 H5 Q5.4 0.7 5.6 1.1 L6 1.8 H12.8 Q13.4 1.8 13.4 2.4 V11 Q13.4 11.6 12.8 11.6 H1.3 Q0.7 11.6 0.7 11 Z" fill="url(#fg)" stroke="#cf8a28" stroke-width="1.2"/>
<path d="M1.5 2.9 H12.6" stroke="#fffbe6" stroke-width="0.8"/>
<path d="M1.3 11 L2.9 6.6 H12" fill="none" stroke="#e6a23c" stroke-width="0.9"/>
<path d="M3.2 7.2 H12.8 V11 H1.8 Z" fill="#fcd669"/>
<path d="M9.5 4.3 H14.6 Q15.7 4.3 15.9 5.2" stroke="#f0a030" stroke-width="0.9" fill="none"/>
<rect x="6.65" y="5.15" width="8.8" height="9.3" rx="1.3" fill="#ffffff" stroke="#1478be" stroke-width="1.3"/>
<path d="M10.2 8.4 V13.4 M13.1 8.4 V13.4 M8.4 10.8 H14.4" stroke="#8db4e4" stroke-width="1" fill="none"/>
<path d="M8.4 7.9 H10.4 M11.6 7.9 H13.6" stroke="#f6b93a" stroke-width="1" fill="none"/>
</svg>
<div class="tl" style="left:81px;top:377px;transform:scaleX(0.8724)">Salas</div>
<svg class="ic" style="left:45px;top:397px" width="9" height="9" viewBox="0 0 9 9">
<rect x="0.5" y="0.5" width="8" height="8" rx="1.2" fill="url(#eg)" stroke="#8e8e8e"/><path d="M2 4.5 H7 M4.5 2 V7" stroke="#2d4fa0" stroke-width="1"/></svg>
<svg class="ic" style="left:60px;top:393px" width="17" height="16" viewBox="0 0 17 16">
<path d="M0.7 1.3 Q0.7 0.7 1.3 0.7 H5 Q5.4 0.7 5.6 1.1 L6 1.8 H12.8 Q13.4 1.8 13.4 2.4 V11 Q13.4 11.6 12.8 11.6 H1.3 Q0.7 11.6 0.7 11 Z" fill="url(#fg)" stroke="#cf8a28" stroke-width="1.2"/>
<path d="M1.5 2.9 H12.6" stroke="#fffbe6" stroke-width="0.8"/>
<path d="M1.3 11 L2.9 6.6 H12" fill="none" stroke="#e6a23c" stroke-width="0.9"/>
<path d="M3.2 7.2 H12.8 V11 H1.8 Z" fill="#fcd669"/>
<path d="M9.5 4.3 H14.6 Q15.7 4.3 15.9 5.2" stroke="#f0a030" stroke-width="0.9" fill="none"/>
<rect x="6.65" y="5.15" width="8.8" height="9.3" rx="1.3" fill="#ffffff" stroke="#1478be" stroke-width="1.3"/>
<path d="M10.2 8.4 V13.4 M13.1 8.4 V13.4 M8.4 10.8 H14.4" stroke="#8db4e4" stroke-width="1" fill="none"/>
<path d="M8.4 7.9 H10.4 M11.6 7.9 H13.6" stroke="#f6b93a" stroke-width="1" fill="none"/>
</svg>
<div class="tl" style="left:81px;top:393px;transform:scaleX(0.8613)">Finesse</div>
<svg class="ic" style="left:45px;top:413px" width="9" height="9" viewBox="0 0 9 9">
<rect x="0.5" y="0.5" width="8" height="8" rx="1.2" fill="url(#eg)" stroke="#8e8e8e"/><path d="M2 4.5 H7 M4.5 2 V7" stroke="#2d4fa0" stroke-width="1"/></svg>
<svg class="ic" style="left:60px;top:409px" width="17" height="16" viewBox="0 0 17 16">
<path d="M0.7 1.3 Q0.7 0.7 1.3 0.7 H5 Q5.4 0.7 5.6 1.1 L6 1.8 H12.8 Q13.4 1.8 13.4 2.4 V11 Q13.4 11.6 12.8 11.6 H1.3 Q0.7 11.6 0.7 11 Z" fill="url(#fg)" stroke="#cf8a28" stroke-width="1.2"/>
<path d="M1.5 2.9 H12.6" stroke="#fffbe6" stroke-width="0.8"/>
<path d="M1.3 11 L2.9 6.6 H12" fill="none" stroke="#e6a23c" stroke-width="0.9"/>
<path d="M3.2 7.2 H12.8 V11 H1.8 Z" fill="#fcd669"/>
<path d="M9.5 4.3 H14.6 Q15.7 4.3 15.9 5.2" stroke="#f0a030" stroke-width="0.9" fill="none"/>
<rect x="6.65" y="5.15" width="8.8" height="9.3" rx="1.3" fill="#ffffff" stroke="#1478be" stroke-width="1.3"/>
<path d="M10.2 8.4 V13.4 M13.1 8.4 V13.4 M8.4 10.8 H14.4" stroke="#8db4e4" stroke-width="1" fill="none"/>
<path d="M8.4 7.9 H10.4 M11.6 7.9 H13.6" stroke="#f6b93a" stroke-width="1" fill="none"/>
</svg>
<div class="tl" style="left:81px;top:409px;transform:scaleX(0.8535)">Portábille</div>
<svg class="ic" style="left:45px;top:429px" width="9" height="9" viewBox="0 0 9 9">
<rect x="0.5" y="0.5" width="8" height="8" rx="1.2" fill="url(#eg)" stroke="#8e8e8e"/><path d="M2 4.5 H7 M4.5 2 V7" stroke="#2d4fa0" stroke-width="1"/></svg>
<svg class="ic" style="left:60px;top:425px" width="17" height="16" viewBox="0 0 17 16">
<path d="M0.7 1.3 Q0.7 0.7 1.3 0.7 H5 Q5.4 0.7 5.6 1.1 L6 1.8 H12.8 Q13.4 1.8 13.4 2.4 V11 Q13.4 11.6 12.8 11.6 H1.3 Q0.7 11.6 0.7 11 Z" fill="url(#fg)" stroke="#cf8a28" stroke-width="1.2"/>
<path d="M1.5 2.9 H12.6" stroke="#fffbe6" stroke-width="0.8"/>
<path d="M1.3 11 L2.9 6.6 H12" fill="none" stroke="#e6a23c" stroke-width="0.9"/>
<path d="M3.2 7.2 H12.8 V11 H1.8 Z" fill="#fcd669"/>
<path d="M9.5 4.3 H14.6 Q15.7 4.3 15.9 5.2" stroke="#f0a030" stroke-width="0.9" fill="none"/>
<rect x="6.65" y="5.15" width="8.8" height="9.3" rx="1.3" fill="#ffffff" stroke="#1478be" stroke-width="1.3"/>
<path d="M10.2 8.4 V13.4 M13.1 8.4 V13.4 M8.4 10.8 H14.4" stroke="#8db4e4" stroke-width="1" fill="none"/>
<path d="M8.4 7.9 H10.4 M11.6 7.9 H13.6" stroke="#f6b93a" stroke-width="1" fill="none"/>
</svg>
<div class="tl" style="left:81px;top:425px;transform:scaleX(0.8612)">Esquadrimed</div>
<svg class="ic" style="left:45px;top:445px" width="9" height="9" viewBox="0 0 9 9">
<rect x="0.5" y="0.5" width="8" height="8" rx="1.2" fill="url(#eg)" stroke="#8e8e8e"/><path d="M2 4.5 H7 M4.5 2 V7" stroke="#2d4fa0" stroke-width="1"/></svg>
<svg class="ic" style="left:60px;top:441px" width="17" height="16" viewBox="0 0 17 16">
<path d="M0.7 1.3 Q0.7 0.7 1.3 0.7 H5 Q5.4 0.7 5.6 1.1 L6 1.8 H12.8 Q13.4 1.8 13.4 2.4 V11 Q13.4 11.6 12.8 11.6 H1.3 Q0.7 11.6 0.7 11 Z" fill="url(#fg)" stroke="#cf8a28" stroke-width="1.2"/>
<path d="M1.5 2.9 H12.6" stroke="#fffbe6" stroke-width="0.8"/>
<path d="M1.3 11 L2.9 6.6 H12" fill="none" stroke="#e6a23c" stroke-width="0.9"/>
<path d="M3.2 7.2 H12.8 V11 H1.8 Z" fill="#fcd669"/>
<path d="M9.5 4.3 H14.6 Q15.7 4.3 15.9 5.2" stroke="#f0a030" stroke-width="0.9" fill="none"/>
<rect x="6.65" y="5.15" width="8.8" height="9.3" rx="1.3" fill="#ffffff" stroke="#1478be" stroke-width="1.3"/>
<path d="M10.2 8.4 V13.4 M13.1 8.4 V13.4 M8.4 10.8 H14.4" stroke="#8db4e4" stroke-width="1" fill="none"/>
<path d="M8.4 7.9 H10.4 M11.6 7.9 H13.6" stroke="#f6b93a" stroke-width="1" fill="none"/>
</svg>
<div class="tl" style="left:81px;top:441px;transform:scaleX(0.8478)">Perlare</div>
<svg class="ic" style="left:45px;top:461px" width="9" height="9" viewBox="0 0 9 9">
<rect x="0.5" y="0.5" width="8" height="8" rx="1.2" fill="url(#eg)" stroke="#8e8e8e"/><path d="M2 4.5 H7 M4.5 2 V7" stroke="#2d4fa0" stroke-width="1"/></svg>
<svg class="ic" style="left:60px;top:457px" width="17" height="16" viewBox="0 0 17 16">
<path d="M0.7 1.3 Q0.7 0.7 1.3 0.7 H5 Q5.4 0.7 5.6 1.1 L6 1.8 H12.8 Q13.4 1.8 13.4 2.4 V11 Q13.4 11.6 12.8 11.6 H1.3 Q0.7 11.6 0.7 11 Z" fill="url(#fg)" stroke="#cf8a28" stroke-width="1.2"/>
<path d="M1.5 2.9 H12.6" stroke="#fffbe6" stroke-width="0.8"/>
<path d="M1.3 11 L2.9 6.6 H12" fill="none" stroke="#e6a23c" stroke-width="0.9"/>
<path d="M3.2 7.2 H12.8 V11 H1.8 Z" fill="#fcd669"/>
<path d="M9.5 4.3 H14.6 Q15.7 4.3 15.9 5.2" stroke="#f0a030" stroke-width="0.9" fill="none"/>
<rect x="6.65" y="5.15" width="8.8" height="9.3" rx="1.3" fill="#ffffff" stroke="#1478be" stroke-width="1.3"/>
<path d="M10.2 8.4 V13.4 M13.1 8.4 V13.4 M8.4 10.8 H14.4" stroke="#8db4e4" stroke-width="1" fill="none"/>
<path d="M8.4 7.9 H10.4 M11.6 7.9 H13.6" stroke="#f6b93a" stroke-width="1" fill="none"/>
</svg>
<div class="tl" style="left:81px;top:457px;transform:scaleX(0.8526)">Villaggio</div>
<svg class="ic" style="left:45px;top:477px" width="9" height="9" viewBox="0 0 9 9">
<rect x="0.5" y="0.5" width="8" height="8" rx="1.2" fill="url(#eg)" stroke="#8e8e8e"/><path d="M2 4.5 H7 M4.5 2 V7" stroke="#2d4fa0" stroke-width="1"/></svg>
<svg class="ic" style="left:60px;top:473px" width="17" height="16" viewBox="0 0 17 16">
<path d="M0.7 1.3 Q0.7 0.7 1.3 0.7 H5 Q5.4 0.7 5.6 1.1 L6 1.8 H12.8 Q13.4 1.8 13.4 2.4 V11 Q13.4 11.6 12.8 11.6 H1.3 Q0.7 11.6 0.7 11 Z" fill="url(#fg)" stroke="#cf8a28" stroke-width="1.2"/>
<path d="M1.5 2.9 H12.6" stroke="#fffbe6" stroke-width="0.8"/>
<path d="M1.3 11 L2.9 6.6 H12" fill="none" stroke="#e6a23c" stroke-width="0.9"/>
<path d="M3.2 7.2 H12.8 V11 H1.8 Z" fill="#fcd669"/>
<path d="M9.5 4.3 H14.6 Q15.7 4.3 15.9 5.2" stroke="#f0a030" stroke-width="0.9" fill="none"/>
<rect x="6.65" y="5.15" width="8.8" height="9.3" rx="1.3" fill="#ffffff" stroke="#1478be" stroke-width="1.3"/>
<path d="M10.2 8.4 V13.4 M13.1 8.4 V13.4 M8.4 10.8 H14.4" stroke="#8db4e4" stroke-width="1" fill="none"/>
<path d="M8.4 7.9 H10.4 M11.6 7.9 H13.6" stroke="#f6b93a" stroke-width="1" fill="none"/>
</svg>
<div class="tl" style="left:81px;top:473px;transform:scaleX(0.8780)">Perfar</div>
<svg class="ic" style="left:45px;top:493px" width="9" height="9" viewBox="0 0 9 9">
<rect x="0.5" y="0.5" width="8" height="8" rx="1.2" fill="url(#eg)" stroke="#8e8e8e"/><path d="M2 4.5 H7 M4.5 2 V7" stroke="#2d4fa0" stroke-width="1"/></svg>
<svg class="ic" style="left:60px;top:489px" width="17" height="16" viewBox="0 0 17 16">
<path d="M0.7 1.3 Q0.7 0.7 1.3 0.7 H5 Q5.4 0.7 5.6 1.1 L6 1.8 H12.8 Q13.4 1.8 13.4 2.4 V11 Q13.4 11.6 12.8 11.6 H1.3 Q0.7 11.6 0.7 11 Z" fill="url(#fg)" stroke="#cf8a28" stroke-width="1.2"/>
<path d="M1.5 2.9 H12.6" stroke="#fffbe6" stroke-width="0.8"/>
<path d="M1.3 11 L2.9 6.6 H12" fill="none" stroke="#e6a23c" stroke-width="0.9"/>
<path d="M3.2 7.2 H12.8 V11 H1.8 Z" fill="#fcd669"/>
<path d="M9.5 4.3 H14.6 Q15.7 4.3 15.9 5.2" stroke="#f0a030" stroke-width="0.9" fill="none"/>
<rect x="6.65" y="5.15" width="8.8" height="9.3" rx="1.3" fill="#ffffff" stroke="#1478be" stroke-width="1.3"/>
<path d="M10.2 8.4 V13.4 M13.1 8.4 V13.4 M8.4 10.8 H14.4" stroke="#8db4e4" stroke-width="1" fill="none"/>
<path d="M8.4 7.9 H10.4 M11.6 7.9 H13.6" stroke="#f6b93a" stroke-width="1" fill="none"/>
</svg>
<div class="tl" style="left:81px;top:489px;transform:scaleX(0.8679)">Flexa Componentes</div>
<svg class="ic" style="left:45px;top:509px" width="9" height="9" viewBox="0 0 9 9">
<rect x="0.5" y="0.5" width="8" height="8" rx="1.2" fill="url(#eg)" stroke="#8e8e8e"/><path d="M2 4.5 H7 M4.5 2 V7" stroke="#2d4fa0" stroke-width="1"/></svg>
<svg class="ic" style="left:60px;top:505px" width="17" height="16" viewBox="0 0 17 16">
<path d="M0.7 1.3 Q0.7 0.7 1.3 0.7 H5 Q5.4 0.7 5.6 1.1 L6 1.8 H12.8 Q13.4 1.8 13.4 2.4 V11 Q13.4 11.6 12.8 11.6 H1.3 Q0.7 11.6 0.7 11 Z" fill="url(#fg)" stroke="#cf8a28" stroke-width="1.2"/>
<path d="M1.5 2.9 H12.6" stroke="#fffbe6" stroke-width="0.8"/>
<path d="M1.3 11 L2.9 6.6 H12" fill="none" stroke="#e6a23c" stroke-width="0.9"/>
<path d="M3.2 7.2 H12.8 V11 H1.8 Z" fill="#fcd669"/>
<path d="M9.5 4.3 H14.6 Q15.7 4.3 15.9 5.2" stroke="#f0a030" stroke-width="0.9" fill="none"/>
<rect x="6.65" y="5.15" width="8.8" height="9.3" rx="1.3" fill="#ffffff" stroke="#1478be" stroke-width="1.3"/>
<path d="M10.2 8.4 V13.4 M13.1 8.4 V13.4 M8.4 10.8 H14.4" stroke="#8db4e4" stroke-width="1" fill="none"/>
<path d="M8.4 7.9 H10.4 M11.6 7.9 H13.6" stroke="#f6b93a" stroke-width="1" fill="none"/>
</svg>
<div class="tl" style="left:81px;top:505px;transform:scaleX(0.9235)">Lucap</div>
<svg class="ic" style="left:45px;top:525px" width="9" height="9" viewBox="0 0 9 9">
<rect x="0.5" y="0.5" width="8" height="8" rx="1.2" fill="url(#eg)" stroke="#8e8e8e"/><path d="M2 4.5 H7 M4.5 2 V7" stroke="#2d4fa0" stroke-width="1"/></svg>
<svg class="ic" style="left:60px;top:521px" width="17" height="16" viewBox="0 0 17 16">
<path d="M0.7 1.3 Q0.7 0.7 1.3 0.7 H5 Q5.4 0.7 5.6 1.1 L6 1.8 H12.8 Q13.4 1.8 13.4 2.4 V11 Q13.4 11.6 12.8 11.6 H1.3 Q0.7 11.6 0.7 11 Z" fill="url(#fg)" stroke="#cf8a28" stroke-width="1.2"/>
<path d="M1.5 2.9 H12.6" stroke="#fffbe6" stroke-width="0.8"/>
<path d="M1.3 11 L2.9 6.6 H12" fill="none" stroke="#e6a23c" stroke-width="0.9"/>
<path d="M3.2 7.2 H12.8 V11 H1.8 Z" fill="#fcd669"/>
<path d="M9.5 4.3 H14.6 Q15.7 4.3 15.9 5.2" stroke="#f0a030" stroke-width="0.9" fill="none"/>
<rect x="6.65" y="5.15" width="8.8" height="9.3" rx="1.3" fill="#ffffff" stroke="#1478be" stroke-width="1.3"/>
<path d="M10.2 8.4 V13.4 M13.1 8.4 V13.4 M8.4 10.8 H14.4" stroke="#8db4e4" stroke-width="1" fill="none"/>
<path d="M8.4 7.9 H10.4 M11.6 7.9 H13.6" stroke="#f6b93a" stroke-width="1" fill="none"/>
</svg>
<div class="tl" style="left:81px;top:521px;transform:scaleX(0.9281)">Solf</div>
</div></div>
<div class="a" style="left:256px;top:89px;width:16px;height:438px;background:#f0f0f0"></div>
<div class="a" style="left:256px;top:106px;width:15px;height:364px;background:#cdcdcd"></div>
<svg class="ic" style="left:256px;top:88px" width="16" height="440" viewBox="0 0 16 440"><path d="M3.7 10.6 L7.5 6.7 L11.3 10.6 V13 L7.5 9.2 L3.7 13 Z M3.7 427.9 L7.5 431.7 L11.3 427.9 V430.3 L7.5 434.1 L3.7 430.3 Z" fill="#565656"/></svg>
<div class="a" style="left:17px;top:543px;width:13px;height:13px;background:#fff;border:1px solid #333"></div>
<div class="a" style="left:17px;top:567px;width:13px;height:13px;background:#fff;border:1px solid #333"></div>
<svg class="ic" style="left:17px;top:567px" width="13" height="13" viewBox="0 0 13 13"><path d="M2.6 6.6 L5.2 9.2 L10.4 3.4" stroke="#111" stroke-width="1.1" fill="none"/></svg>
<div class="t12" style="left:34px;top:541px;letter-spacing:-0.361px;">Aplicar nos itens selecionados</div>
<div class="t12" style="left:34px;top:565px;letter-spacing:-0.336px;">Aplicar nos itens existentes</div>
<div class="btn" style="left:547px;padding-left:2px;letter-spacing:-0.241px;">Aplicar</div>
<div class="btn" style="left:628px;padding-left:2px;letter-spacing:-0.622px;">OK</div>
<div class="btn" style="left:709px;padding-left:0px;letter-spacing:-0.454px;">Cancelar</div>
<div class="a" style="left:281px;top:59px;width:508px;height:235px;background:#fff;border:1px solid #646464"></div>
<svg class="ic" style="left:282px;top:60px" width="506" height="233" viewBox="282 60 506 233">
<defs>
<linearGradient id="wood" x1="0" y1="0" x2="1" y2="0"><stop offset="0.0000" stop-color="#9b6142"/><stop offset="0.0083" stop-color="#9c6243"/><stop offset="0.0167" stop-color="#a16748"/><stop offset="0.0250" stop-color="#9c6243"/><stop offset="0.0333" stop-color="#9d6344"/><stop offset="0.0417" stop-color="#9e6445"/><stop offset="0.0500" stop-color="#a06647"/><stop offset="0.0583" stop-color="#9a6041"/><stop offset="0.0667" stop-color="#995f40"/><stop offset="0.0750" stop-color="#a3694a"/><stop offset="0.0833" stop-color="#9f6546"/><stop offset="0.0917" stop-color="#9e6445"/><stop offset="0.1000" stop-color="#a16748"/><stop offset="0.1083" stop-color="#a06647"/><stop offset="0.1167" stop-color="#a3694a"/><stop offset="0.1250" stop-color="#985e3f"/><stop offset="0.1333" stop-color="#975d3e"/><stop offset="0.1417" stop-color="#9c6243"/><stop offset="0.1500" stop-color="#995f40"/><stop offset="0.1583" stop-color="#965c3d"/><stop offset="0.1667" stop-color="#955b3c"/><stop offset="0.1750" stop-color="#9c6243"/><stop offset="0.1833" stop-color="#9f6546"/><stop offset="0.1917" stop-color="#9e6445"/><stop offset="0.2000" stop-color="#9c6243"/><stop offset="0.2083" stop-color="#915738"/><stop offset="0.2167" stop-color="#995f40"/><stop offset="0.2250" stop-color="#965c3d"/><stop offset="0.2333" stop-color="#975d3e"/><stop offset="0.2417" stop-color="#9a6041"/><stop offset="0.2500" stop-color="#9b6142"/><stop offset="0.2583" stop-color="#985e3f"/><stop offset="0.2667" stop-color="#995f40"/><stop offset="0.2750" stop-color="#915738"/><stop offset="0.2833" stop-color="#985e3f"/><stop offset="0.2917" stop-color="#905637"/><stop offset="0.3000" stop-color="#985e3f"/><stop offset="0.3083" stop-color="#925839"/><stop offset="0.3167" stop-color="#915738"/><stop offset="0.3250" stop-color="#925839"/><stop offset="0.3333" stop-color="#955b3c"/><stop offset="0.3417" stop-color="#955b3c"/><stop offset="0.3500" stop-color="#9c6243"/><stop offset="0.3583" stop-color="#93593a"/><stop offset="0.3667" stop-color="#9f6546"/><stop offset="0.3750" stop-color="#9a6041"/><stop offset="0.3833" stop-color="#995f40"/><stop offset="0.3917" stop-color="#9b6142"/><stop offset="0.4000" stop-color="#9d6344"/><stop offset="0.4083" stop-color="#975d3e"/><stop offset="0.4167" stop-color="#9b6142"/><stop offset="0.4250" stop-color="#965c3d"/><stop offset="0.4333" stop-color="#9d6344"/><stop offset="0.4417" stop-color="#975d3e"/><stop offset="0.4500" stop-color="#9a6041"/><stop offset="0.4583" stop-color="#925839"/><stop offset="0.4667" stop-color="#9c6243"/><stop offset="0.4750" stop-color="#925839"/><stop offset="0.4833" stop-color="#975d3e"/><stop offset="0.4917" stop-color="#9a6041"/><stop offset="0.5000" stop-color="#945a3b"/><stop offset="0.5083" stop-color="#965c3d"/><stop offset="0.5167" stop-color="#975d3e"/><stop offset="0.5250" stop-color="#8f5536"/><stop offset="0.5333" stop-color="#995f40"/><stop offset="0.5417" stop-color="#915738"/><stop offset="0.5500" stop-color="#925839"/><stop offset="0.5583" stop-color="#995f40"/><stop offset="0.5667" stop-color="#905637"/><stop offset="0.5750" stop-color="#955b3c"/><stop offset="0.5833" stop-color="#915738"/><stop offset="0.5917" stop-color="#8d5334"/><stop offset="0.6000" stop-color="#8e5435"/><stop offset="0.6083" stop-color="#965c3d"/><stop offset="0.6167" stop-color="#995f40"/><stop offset="0.6250" stop-color="#8f5536"/><stop offset="0.6333" stop-color="#945a3b"/><stop offset="0.6417" stop-color="#905637"/><stop offset="0.6500" stop-color="#945a3b"/><stop offset="0.6583" stop-color="#975d3e"/><stop offset="0.6667" stop-color="#925839"/><stop offset="0.6750" stop-color="#925839"/><stop offset="0.6833" stop-color="#9c6243"/><stop offset="0.6917" stop-color="#93593a"/><stop offset="0.7000" stop-color="#965c3d"/><stop offset="0.7083" stop-color="#985e3f"/><stop offset="0.7167" stop-color="#955b3c"/><stop offset="0.7250" stop-color="#9c6243"/><stop offset="0.7333" stop-color="#9b6142"/><stop offset="0.7417" stop-color="#a06647"/><stop offset="0.7500" stop-color="#9b6142"/><stop offset="0.7583" stop-color="#9b6142"/><stop offset="0.7667" stop-color="#965c3d"/><stop offset="0.7750" stop-color="#9e6445"/><stop offset="0.7833" stop-color="#9e6445"/><stop offset="0.7917" stop-color="#975d3e"/><stop offset="0.8000" stop-color="#9f6546"/><stop offset="0.8083" stop-color="#9e6445"/><stop offset="0.8167" stop-color="#975d3e"/><stop offset="0.8250" stop-color="#985e3f"/><stop offset="0.8333" stop-color="#945a3b"/><stop offset="0.8417" stop-color="#965c3d"/><stop offset="0.8500" stop-color="#975d3e"/><stop offset="0.8583" stop-color="#915738"/><stop offset="0.8667" stop-color="#985e3f"/><stop offset="0.8750" stop-color="#9d6344"/><stop offset="0.8833" stop-color="#925839"/><stop offset="0.8917" stop-color="#93593a"/><stop offset="0.9000" stop-color="#945a3b"/><stop offset="0.9083" stop-color="#9c6243"/><stop offset="0.9167" stop-color="#925839"/><stop offset="0.9250" stop-color="#915738"/><stop offset="0.9333" stop-color="#915738"/><stop offset="0.9417" stop-color="#985e3f"/><stop offset="0.9500" stop-color="#9e6445"/><stop offset="0.9583" stop-color="#995f40"/><stop offset="0.9667" stop-color="#955b3c"/><stop offset="0.9750" stop-color="#9d6344"/><stop offset="0.9833" stop-color="#9c6243"/><stop offset="0.9917" stop-color="#975d3e"/><stop offset="1.0000" stop-color="#9b6142"/></linearGradient>
<linearGradient id="woodv" x1="0" y1="0" x2="0" y2="1"><stop offset="0" stop-color="#b06a40" stop-opacity="0.15"/><stop offset="0.35" stop-color="#b06a40" stop-opacity="0"/></linearGradient>
</defs>
<polygon points="462,87 583,96.6 575.2,279.4 473.5,257.6" fill="url(#wood)"/>
<polygon points="462,87 583,96.6 575.2,279.4 473.5,257.6" fill="url(#woodv)"/>
<polygon points="583,96.6 584,96.4 576.4,277.8 575.2,279.4" fill="#8a5238"/>
<polygon points="461.2,72.4 583.6,81.2 583.8,83.6 461.2,75.4" fill="#cfcfcf"/>
<polygon points="464.2,75.4 583.8,83.6 583.9,95.6 464.2,85.6" fill="#d9d9d9"/>
<polygon points="461.2,72.4 583.6,81.2 583.6,82 461.2,73.4" fill="#b4b4b4"/>
<polygon points="462,85.4 583.9,95.4 581.4,97.4 462,87.4" fill="#b2b2b2"/>
<polygon points="462,86.3 581.8,96.3 581.4,97.4 462,87.4" fill="#e2e2e2"/>
<path d="M584.6 82 H590.6 M584.6 97.6 H590.6 M588 82 V97.6" stroke="#ed1c24" stroke-width="2.5" fill="none"/>
<text x="593.4" y="95.4" font-family="Liberation Sans, sans-serif" font-weight="bold" font-size="13" fill="#ed1c24" stroke="#ed1c24" stroke-width="0.5">A</text>
</svg>
<div class="hdr" style="top:304.4px"></div>
<div class="hdr" style="top:392.4px"></div>
<div class="t11" style="left:299px;top:306px;transform:scaleX(0.9129);">Puxador Gola</div>
<div class="t11" style="left:296px;top:394px;transform:scaleX(0.9137);">Listagem</div>
<div class="circ" style="left:761px;top:305px"><svg class="ic" style="left:4.5px;top:4px" width="8" height="9" viewBox="0 0 8 9"><path d="M0.8 4 L4 1 L7.2 4 M0.8 8 L4 5 L7.2 8" stroke="#15255f" stroke-width="1.2" fill="none"/></svg></div>
<div class="circ" style="left:761px;top:393px"><svg class="ic" style="left:4.5px;top:4px" width="8" height="9" viewBox="0 0 8 9"><path d="M0.8 4 L4 1 L7.2 4 M0.8 8 L4 5 L7.2 8" stroke="#15255f" stroke-width="1.2" fill="none"/></svg></div>
<div class="ln" style="top:346px"></div>
<div class="ln" style="top:366px"></div>
<div class="ln" style="top:386px"></div>
<div class="ln" style="top:434px"></div>
<div class="ln" style="top:454px"></div>
<div class="t11" style="left:306px;top:329px;transform:scaleX(0.8706);">A - Altura</div>
<div class="t11" style="left:306px;top:349px;transform:scaleX(0.8577);">B - Ponteiras</div>
<div class="t11" style="left:306px;top:369px;transform:scaleX(0.8565);">C - Espessura Ponteiras</div>
<div class="t11" style="left:306px;top:417px;transform:scaleX(0.8760);">D - Quantidade</div>
<div class="t11" style="left:306px;top:437px;transform:scaleX(0.8541);">E - Dimensão Barra</div>
<div class="cb" style="top:326px"><svg class="ic" style="left:52px;top:7px" width="10" height="6" viewBox="0 0 10 6"><path d="M0.8 0.8 L5 5 L9.2 0.8" stroke="#333" stroke-width="1" fill="none"/></svg></div>
<div class="t11" style="left:717px;top:328px;transform:scaleX(0.8989);">4,2</div>
<div class="cb" style="top:346px"><svg class="ic" style="left:52px;top:7px" width="10" height="6" viewBox="0 0 10 6"><path d="M0.8 0.8 L5 5 L9.2 0.8" stroke="#333" stroke-width="1" fill="none"/></svg></div>
<div class="t11" style="left:717px;top:348px;transform:scaleX(0.8932);">Não usar</div>
<div class="cb" style="top:366px"><svg class="ic" style="left:52px;top:7px" width="10" height="6" viewBox="0 0 10 6"><path d="M0.8 0.8 L5 5 L9.2 0.8" stroke="#333" stroke-width="1" fill="none"/></svg></div>
<div class="t11" style="left:717px;top:368px;transform:scaleX(0.8348);">0,15</div>
<div class="cb" style="top:414px"><svg class="ic" style="left:52px;top:7px" width="10" height="6" viewBox="0 0 10 6"><path d="M0.8 0.8 L5 5 L9.2 0.8" stroke="#333" stroke-width="1" fill="none"/></svg></div>
<div class="t11" style="left:717px;top:416px;transform:scaleX(0.8798);">Metro</div>
<div class="a" style="left:715px;top:435px;width:65px;height:18px;background:#fff"></div>
<div class="t11" style="left:719px;top:437px;transform:scaleX(0.8986);">300</div>
<div class="a" style="left:0;top:0;width:803px;height:1px;background:#6b6b6b"></div>
<div class="a" style="left:0;top:0;width:1px;height:603px;background:#6b6b6b"></div>
<div class="a" style="left:802px;top:0;width:1px;height:603px;background:#6b6b6b"></div>
<div class="a" style="left:0;top:602px;width:803px;height:1px;background:#6b6b6b"></div>
<div class="a" style="left:801px;top:31px;width:1px;height:571px;background:#fafafa"></div>
<div class="a" style="left:1px;top:601px;width:801px;height:1px;background:#fafafa"></div>
</body></html>
